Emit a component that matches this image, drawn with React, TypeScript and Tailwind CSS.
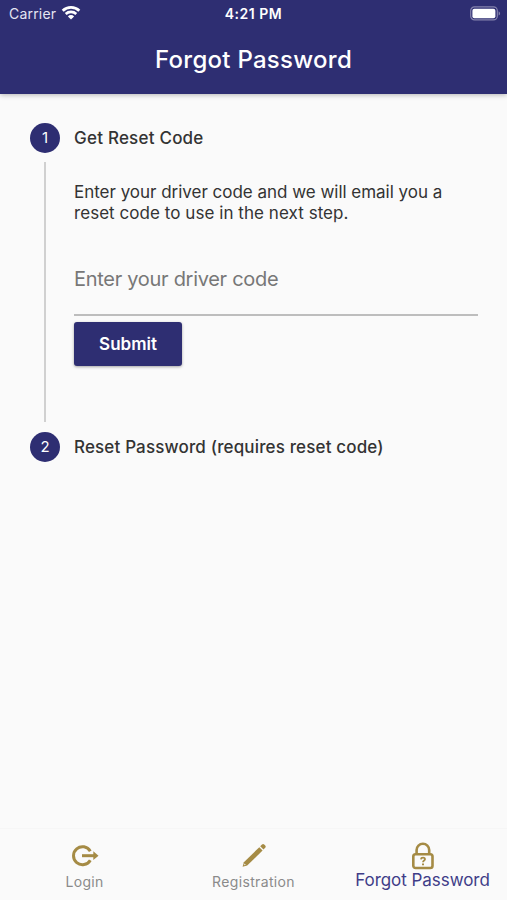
import { useState } from 'react'

function WifiIcon() {
  return (
    <svg width="20" height="16" viewBox="0 0 20 16" fill="none" stroke="white">
      <path d="M1.7 5.7A12 12 0 0 1 18.3 5.7" strokeWidth="2.8" />
      <path d="M4.7 9A7.7 7.7 0 0 1 15.3 9" strokeWidth="2.6" />
      <path d="M10 14.6L6.9 11.4A4.3 4.3 0 0 1 13.1 11.4Z" fill="white" stroke="none" />
    </svg>
  )
}

function BatteryIcon() {
  return (
    <svg width="31" height="15" viewBox="0 0 31 15" fill="none">
      <rect x="0.7" y="0.9" width="26.6" height="13" rx="3.8" stroke="#8583ad" strokeWidth="1.2" />
      <rect x="2.4" y="2.7" width="23" height="9.5" rx="2" fill="white" />
      <path d="M28.6 5.2C30.6 6 30.6 8.8 28.6 9.6Z" fill="#8583ad" />
    </svg>
  )
}

function LoginIcon() {
  return (
    <svg width="28" height="24" viewBox="0 0 28 24" fill="none" stroke="#a58b45" strokeWidth="3">
      <path d="M19.3 7.2A9 9 0 1 0 19.3 16.2" />
      <path d="M11 11.7H24" strokeWidth="3" />
      <path d="M22.3 7.3L27.5 11.7L22.3 16.1Z" fill="#a58b45" stroke="none" />
    </svg>
  )
}

function PencilIcon() {
  return (
    <svg width="26" height="26" viewBox="0 0 26 26" fill="#a58b45">
      <path d="M1.6 24.8L2.9 20.2L18.3 5.2L21.6 8.5L6.2 23.5Z" />
      <path d="M19.2 4.3L21 2.6C21.7 1.9 22.5 1.9 23.2 2.6L24.2 3.6C24.9 4.3 24.9 5.1 24.2 5.8L22.5 7.6Z" />
      <path d="M3.6 21.6L4.8 22.8L3 23.3Z" fill="#fafafa" />
    </svg>
  )
}

function LockIcon() {
  return (
    <svg width="24" height="28" viewBox="0 0 24 28" fill="none" stroke="#a58b45" strokeWidth="2.6">
      <rect x="2.3" y="12.2" width="19.2" height="13.8" rx="2.2" />
      <path d="M5.6 12.2V8.1A6.3 6.3 0 0 1 18.2 8.1V12.2" />
      <path d="M9.9 17.3C10.1 15.2 14 15.2 14 17.2C14 18.6 12 18.5 12 20.3" strokeWidth="1.8" />
      <path d="M12 21.4V23.2" strokeWidth="2" />
    </svg>
  )
}

function StepNumber({ value }: { value: number }) {
  return (
    <div className="flex h-[30px] w-[30px] shrink-0 items-center justify-center rounded-full bg-[#2e2e72] text-[15px] text-white">
      {value}
    </div>
  )
}

export default function App() {
  const [code, setCode] = useState('')

  return (
    <div className="flex h-[900px] w-full flex-col bg-[#fafafa] font-['Inter',sans-serif] text-[#333333]">
      {/* Header */}
      <header className="z-10 h-[94px] shrink-0 bg-[#2e2e72] text-white shadow-[0_1px_5px_rgba(0,0,0,0.28)]">
        <div className="grid h-[26px] grid-cols-3 items-center pr-[6px] pl-[6px]">
          <div className="flex items-center gap-[5px] pl-[3px]">
            <span className="text-[14px] tracking-[0.2px] text-[#e5e5f2]">Carrier</span>
            <WifiIcon />
          </div>
          <span className="text-center text-[14px] font-semibold tracking-[0.5px]">4:21 PM</span>
          <div className="flex justify-end">
            <BatteryIcon />
          </div>
        </div>
        <h1 className="mt-4 text-center text-[24px] leading-9 font-medium tracking-[0.27px]">Forgot Password</h1>
      </header>

      {/* Steps */}
      <main className="flex-1 pt-[29px] pr-[29px] pl-[30px]">
        <div className="flex items-center gap-[14px]">
          <StepNumber value={1} />
          <h2 className="pt-px text-[17px] font-medium tracking-[0.22px]">Get Reset Code</h2>
        </div>

        <div className="mt-[9px] ml-[14px] h-[260px] border-l-2 border-[#d0d0d0] pl-7">
          <p className="pt-5 text-[17px] leading-[21px] whitespace-nowrap">
            <span className="tracking-[-0.02px]">Enter your driver code and we will email you a</span>
            <br />
            <span className="tracking-[0.05px]">reset code to use in the next step.</span>
          </p>
          <input
            value={code}
            onChange={(e) => setCode(e.target.value)}
            placeholder="Enter your driver code"
            className="mt-[19px] block h-[73px] w-full border-b-2 border-[#bdbdbd] text-[20px] tracking-[-0.29px] outline-none placeholder:text-[#777777]"
          />
          <button className="mt-[6px] h-11 w-[108px] rounded-[3px] bg-[#2e2e72] pt-[2px] text-[17px] font-semibold text-white shadow-[0_1px_3px_rgba(0,0,0,0.35)]">
            Submit
          </button>
        </div>

        <div className="mt-[10px] flex items-center gap-[14px]">
          <StepNumber value={2} />
          <h2 className="pt-px text-[17px] font-medium tracking-[0.15px] whitespace-nowrap">Reset Password (requires reset code)</h2>
        </div>
      </main>

      {/* Bottom navigation */}
      <nav className="grid h-[72px] shrink-0 grid-cols-3 border-t border-[#f6f6f6] text-[#8a8a8a]">
        <a className="flex flex-col items-center pt-[15px]">
          <LoginIcon />
          <span className="mt-[4px] text-[14px] leading-5 tracking-[0.25px]">Login</span>
        </a>
        <a className="flex flex-col items-center pt-[13px]">
          <PencilIcon />
          <span className="mt-[4px] text-[14px] leading-5 tracking-[0.35px]">Registration</span>
        </a>
        <a className="flex flex-col items-center pt-[13px] text-[#403d88]">
          <LockIcon />
          <span className="text-[17px] leading-5 tracking-[-0.05px] whitespace-nowrap">Forgot Password</span>
        </a>
      </nav>
    </div>
  )
}
